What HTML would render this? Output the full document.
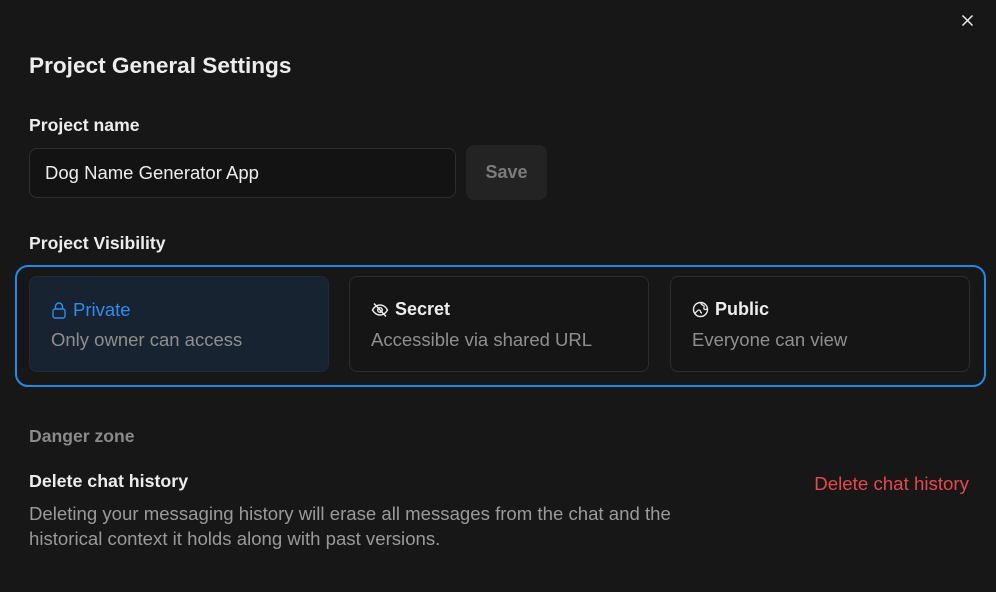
<!DOCTYPE html>
<html><head><style>
*{box-sizing:border-box;margin:0;padding:0}
body{width:996px;height:592px;background:#171717;font-family:"Liberation Sans",sans-serif;color:#ededed;position:relative;overflow:hidden}
.a{position:absolute;white-space:nowrap}
.h{font-weight:bold}
.card{position:absolute;top:276px;height:96px;width:300px;border:1px solid #2c2c2c;border-radius:8px;background:#151515}
.card .t{position:absolute;left:21px;top:22px;font-size:18px;font-weight:bold;display:flex;align-items:center;gap:6px}
.card .d{position:absolute;left:21px;top:52px;font-size:18.5px;color:#8f8f8f}
</style></head><body>
<svg class="a" style="left:961px;top:14px" width="13" height="13" viewBox="0 0 13 13"><path d="M1.5 1.5L11.5 11.5M11.5 1.5L1.5 11.5" stroke="#ededed" stroke-width="1.5"/></svg>
<div class="a h" style="left:29px;top:53px;font-size:22.6px">Project General Settings</div>
<div class="a h" style="left:29px;top:115px;font-size:17.6px">Project name</div>
<div class="a" style="left:29px;top:148px;width:427px;height:50px;border:1px solid #2e2e2e;border-radius:8px;background:#131313"></div>
<div class="a" style="left:45px;top:162px;font-size:18.5px">Dog Name Generator App</div>
<div class="a h" style="left:466px;top:145px;width:81px;height:55px;border-radius:8px;background:#232323;color:#7c7c7c;font-size:18px;text-align:center;line-height:55px">Save</div>
<div class="a h" style="left:29px;top:233px;font-size:17.6px">Project Visibility</div>
<div class="a" style="left:15px;top:265px;width:971px;height:122px;border:2px solid #1a8ce6;border-radius:13px"></div>
<div class="card" style="left:29px;background:#172330;border-color:#1d2b3a">
<div class="t" style="color:#2b8ff0;font-weight:normal;font-size:18.5px"><svg width="16" height="18" viewBox="0 0 16 18"><rect x="2" y="8" width="12" height="9" rx="2" fill="none" stroke="#2b8ff0" stroke-width="1.4"/><path d="M4.5 8V5.5a3.5 3.5 0 0 1 7 0V8" fill="none" stroke="#2b8ff0" stroke-width="1.4"/></svg>Private</div>
<div class="d">Only owner can access</div></div>
<div class="card" style="left:349px">
<div class="t"><svg width="18" height="16" viewBox="0 0 18 16"><path d="M1.5 8c2-3.5 4.5-5 7.5-5s5.5 1.5 7.5 5c-2 3.5-4.5 5-7.5 5S3.5 11.5 1.5 8z" fill="none" stroke="#ededed" stroke-width="1.4"/><circle cx="9" cy="8" r="2.3" fill="none" stroke="#ededed" stroke-width="1.4"/><path d="M3 1.5L15 14.5" stroke="#ededed" stroke-width="1.4"/></svg>Secret</div>
<div class="d">Accessible via shared URL</div></div>
<div class="card" style="left:670px">
<div class="t"><svg width="17" height="17" viewBox="0 0 17 17"><circle cx="8.5" cy="8.5" r="7" fill="none" stroke="#ededed" stroke-width="1.4"/><path d="M3 12c2-1 2-3 4-3s1 3 3 3M9 2c0 2 2 2 3 3s-1 2 0 3 3 0 3 0" fill="none" stroke="#ededed" stroke-width="1.3"/></svg>Public</div>
<div class="d">Everyone can view</div></div>
<div class="a h" style="left:29px;top:426px;font-size:17.6px;color:#8a8a8a">Danger zone</div>
<div class="a h" style="left:29px;top:471px;font-size:17.8px">Delete chat history</div>
<div class="a" style="right:27px;top:473px;font-size:18.7px;color:#e5484d">Delete chat history</div>
<div class="a" style="left:29px;top:501px;font-size:18.6px;color:#9a9a9a;line-height:25px">Deleting your messaging history will erase all messages from the chat and the<br>historical context it holds along with past versions.</div>
</body></html>
